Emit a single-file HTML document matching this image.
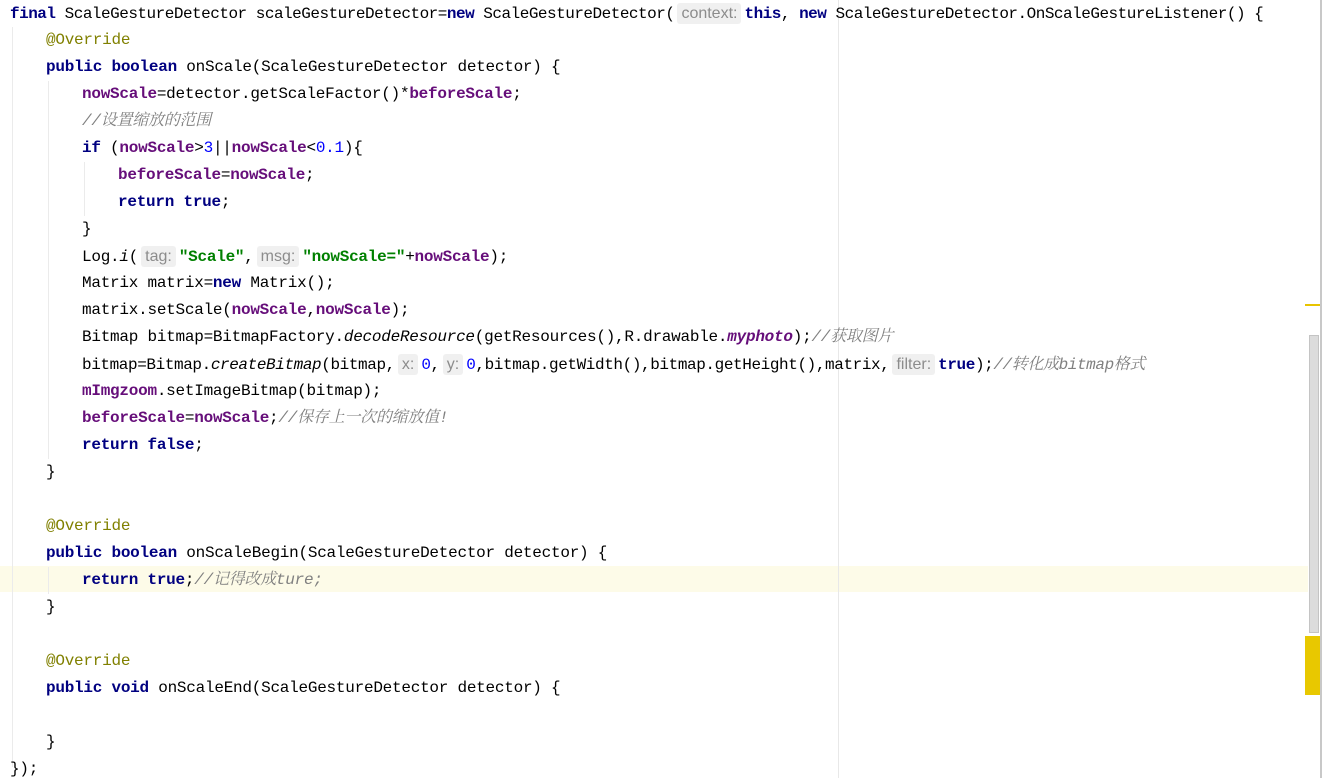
<!DOCTYPE html>
<html><head><meta charset="utf-8"><style>
body{margin:0;width:1322px;height:778px;background:#fff;position:relative;overflow:hidden;
font-family:"Liberation Mono","Noto Sans CJK SC",monospace;font-size:16px;letter-spacing:-0.25px;color:#000}
.l{position:absolute;height:27px;line-height:27px;white-space:pre}
.k{color:#000080;font-weight:bold}
.a{color:#808000}
.f{color:#660e7a;font-weight:bold}
.s{color:#008000;font-weight:bold}
.n{color:#0000ff}
.c{color:#808080;font-style:italic;font-family:"Liberation Mono","Noto Serif CJK SC",monospace}
.i{font-style:italic}
.h{font-family:"Liberation Sans",sans-serif;color:#8c8c8c;background:#f0f0f0;border-radius:3px;padding:2px 4px;letter-spacing:0;font-size:16px;margin:0 3px}
.g{position:absolute;width:1px;background:#ebebeb}
</style></head><body>
<div style="position:absolute;left:0;top:566px;width:1308px;height:26px;background:#fdfbe8"></div>
<div class="g" style="left:12px;top:27px;height:740px"></div>
<div class="g" style="left:48px;top:81px;height:378px"></div>
<div class="g" style="left:48px;top:567px;height:27px"></div>
<div class="g" style="left:84px;top:162px;height:54px"></div>
<div style="position:absolute;left:838px;top:0;width:1px;height:778px;background:#e8e8e8"></div>
<div style="position:absolute;left:1320px;top:0;width:2px;height:778px;background:#c8c8c8"></div>
<div style="position:absolute;left:1309px;top:335px;width:10px;height:298px;background:#dcdcdc;border:1px solid #c4c4c4;box-sizing:border-box"></div>
<div style="position:absolute;left:1305px;top:304px;width:15px;height:2px;background:#e8c400"></div>
<div style="position:absolute;left:1305px;top:636px;width:15px;height:59px;background:#e8c800"></div>

<div class="l" style="top:0;left:10px;letter-spacing:-0.5px"><span class="k">final</span> ScaleGestureDetector scaleGestureDetector=<span class="k">new</span> ScaleGestureDetector(<span class="h">context:</span><span class="k">this</span>, <span class="k">new</span> ScaleGestureDetector.OnScaleGestureListener() {</div>
<div class="l a" style="top:27px;left:46px">@Override</div>
<div class="l" style="top:54px;left:46px"><span class="k">public boolean</span> onScale(ScaleGestureDetector detector) {</div>
<div class="l" style="top:81px;left:82px"><span class="f">nowScale</span>=detector.getScaleFactor()*<span class="f">beforeScale</span>;</div>
<div class="l c" style="top:108px;left:82px">//设置缩放的范围</div>
<div class="l" style="top:135px;left:82px"><span class="k">if</span> (<span class="f">nowScale</span>&gt;<span class="n">3</span>||<span class="f">nowScale</span>&lt;<span class="n">0.1</span>){</div>
<div class="l" style="top:162px;left:118px"><span class="f">beforeScale</span>=<span class="f">nowScale</span>;</div>
<div class="l" style="top:189px;left:118px"><span class="k">return true</span>;</div>
<div class="l" style="top:216px;left:82px">}</div>
<div class="l" style="top:243px;left:82px">Log.<span class="i">i</span>(<span class="h">tag:</span><span class="s">"Scale"</span>,<span class="h">msg:</span><span class="s">"nowScale="</span>+<span class="f">nowScale</span>);</div>
<div class="l" style="top:270px;left:82px">Matrix matrix=<span class="k">new</span> Matrix();</div>
<div class="l" style="top:297px;left:82px">matrix.setScale(<span class="f">nowScale</span>,<span class="f">nowScale</span>);</div>
<div class="l" style="top:324px;left:82px">Bitmap bitmap=BitmapFactory.<span class="i">decodeResource</span>(getResources(),R.drawable.<span class="f i">myphoto</span>);<span class="c">//获取图片</span></div>
<div class="l" style="top:351px;left:82px;letter-spacing:-0.4px">bitmap=Bitmap.<span class="i">createBitmap</span>(bitmap,<span class="h">x:</span><span class="n">0</span>,<span class="h">y:</span><span class="n">0</span>,bitmap.getWidth(),bitmap.getHeight(),matrix,<span class="h">filter:</span><span class="k">true</span>);<span class="c">//转化成bitmap格式</span></div>
<div class="l" style="top:378px;left:82px"><span class="f">mImgzoom</span>.setImageBitmap(bitmap);</div>
<div class="l" style="top:405px;left:82px"><span class="f">beforeScale</span>=<span class="f">nowScale</span>;<span class="c">//保存上一次的缩放值!</span></div>
<div class="l" style="top:432px;left:82px"><span class="k">return false</span>;</div>
<div class="l" style="top:459px;left:46px">}</div>
<div class="l a" style="top:513px;left:46px">@Override</div>
<div class="l" style="top:540px;left:46px"><span class="k">public boolean</span> onScaleBegin(ScaleGestureDetector detector) {</div>
<div class="l" style="top:567px;left:82px"><span class="k">return true</span>;<span class="c">//记得改成ture;</span></div>
<div class="l" style="top:594px;left:46px">}</div>
<div class="l a" style="top:648px;left:46px">@Override</div>
<div class="l" style="top:675px;left:46px"><span class="k">public void</span> onScaleEnd(ScaleGestureDetector detector) {</div>
<div class="l" style="top:729px;left:46px">}</div>
<div class="l" style="top:756px;left:10px">});</div>
</body></html>
